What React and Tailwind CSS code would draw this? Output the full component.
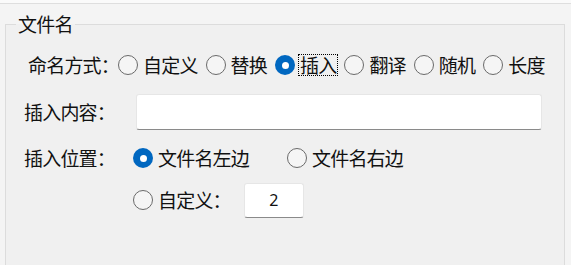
import React from 'react';

const CJK = { fontFamily: '"Noto Sans CJK SC", "Noto Sans", sans-serif' };

function Radio({ checked = false, label, focused = false, className = '' }) {
  return (
    <span className={`flex items-center ${className}`}>
      {checked ? (
        <span className="w-5 h-5 shrink-0 rounded-full bg-[#0067c0] flex items-center justify-center">
          <span className="w-[7px] h-[7px] rounded-full bg-white" />
        </span>
      ) : (
        <span className="w-5 h-5 shrink-0 rounded-full border-[1.5px] border-[#6a6a6a] bg-[#f5f5f5]" />
      )}
      <span
        className={`ml-[3px] px-[1px] border border-dotted leading-[20px] whitespace-nowrap ${
          focused ? 'border-black' : 'border-transparent'
        }`}
      >
        {label}
      </span>
    </span>
  );
}

export default function App() {
  const modes = ['自定义', '替换', '插入', '翻译', '随机', '长度'];
  const current = '插入';

  return (
    <div
      className="w-[571px] h-[265px] overflow-hidden bg-[#f4f4f4] text-[#111] text-[19px] tracking-[-0.8px]"
      style={CJK}
    >
      <div className="h-[4px] bg-[#fafafa] border-b border-[#dedede]" />
      <fieldset className="mt-[9px] ml-[5px] w-[560px] h-[262px] border border-[#dcdcdc] bg-[#f0f0f0]">
        <legend className="ml-[10px] px-[2px] leading-[22px]">文件名</legend>

        <div className="flex flex-col pt-[19px]">
          <div className="flex items-center h-[22px] pl-[22px]">
            <span className="w-[90px] whitespace-nowrap leading-[20px]">命名方式：</span>
            {modes.map((m) => (
              <Radio key={m} label={m} checked={m === current} focused={m === current} className="mr-[6px]" />
            ))}
          </div>

          <div className="flex items-center h-[36px] mt-[18px] pl-[18px]">
            <span className="w-[112px] whitespace-nowrap">插入内容：</span>
            <div className="w-[406px] h-[36px] bg-white rounded-[3px] border border-[#e6e6e6] border-b-[#8a8a8a]" />
          </div>

          <div className="flex items-center h-[22px] mt-[17px] pl-[18px]">
            <span className="w-[109px] whitespace-nowrap">插入位置：</span>
            <Radio checked label="文件名左边" className="w-[154px]" />
            <Radio label="文件名右边" />
          </div>

          <div className="flex items-center h-[36px] mt-[13px] pl-[18px]">
            <span className="w-[109px]" />
            <Radio label="自定义：" />
            <div
              className="ml-[11px] w-[60px] h-[35px] bg-white rounded-[3px] border border-[#e6e6e6] border-b-[#8a8a8a] flex items-center justify-center text-[16px] tracking-normal"
              style={{ fontFamily: '"Noto Sans", "Liberation Sans", sans-serif' }}
            >
              2
            </div>
          </div>
        </div>
      </fieldset>
    </div>
  );
}
